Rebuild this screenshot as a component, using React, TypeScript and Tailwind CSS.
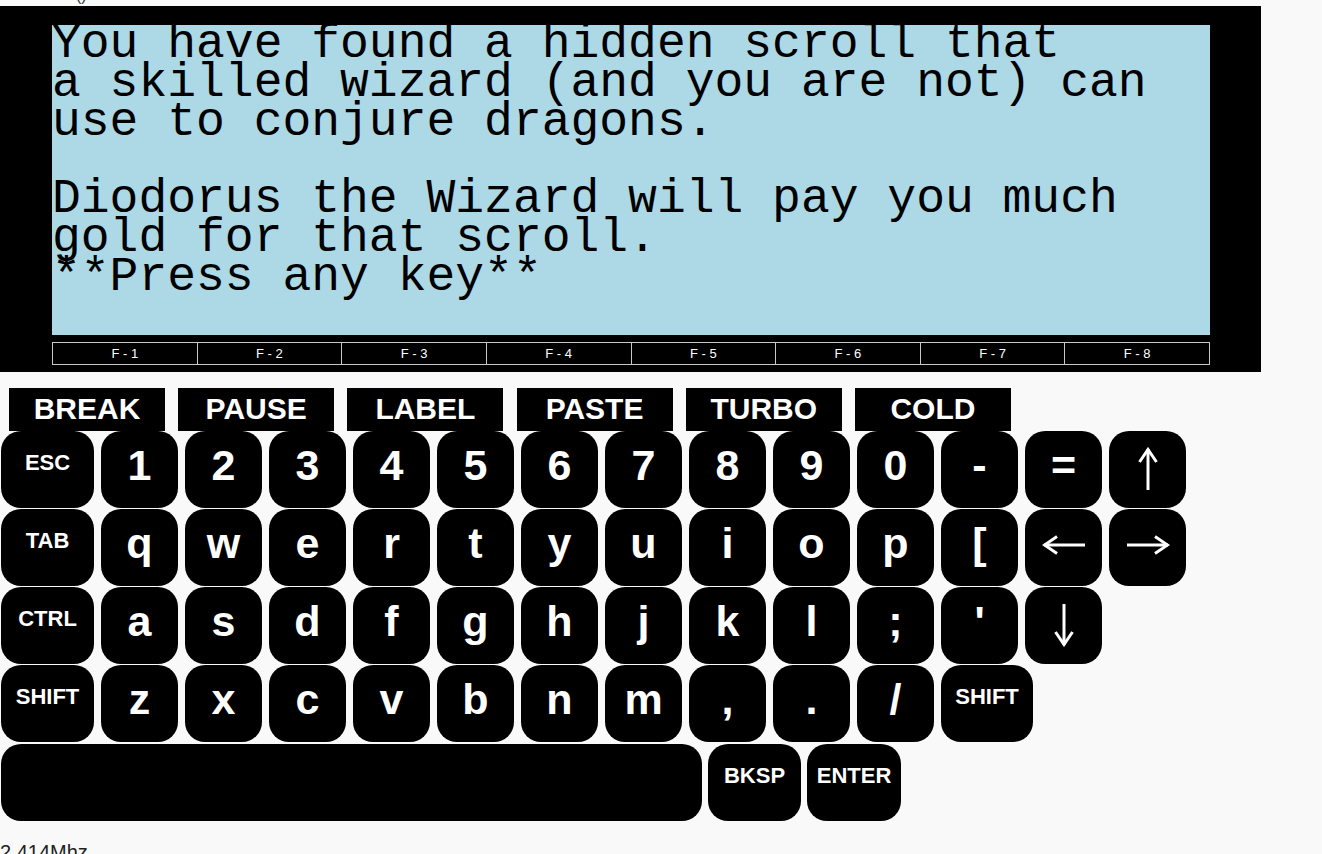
import React from "react";

const screenLines = [
  "You have found a hidden scroll that",
  "a skilled wizard (and you are not) can",
  "use to conjure dragons.",
  "",
  "Diodorus the Wizard will pay you much",
  "gold for that scroll.",
  "**Press any key**",
  "",
];

type KeyDef = { label: string; w?: string; small?: boolean; arrow?: "up" | "down" | "left" | "right" };

function Arrow({ dir }: { dir: "up" | "down" | "left" | "right" }) {
  const rot = { up: 0, right: 90, down: 180, left: 270 }[dir];
  return (
    <div className="h-[77px] flex items-start justify-center pt-[16px]">
      <svg
        width="44"
        height="44"
        viewBox="0 0 44 44"
        className={dir === "left" || dir === "right" ? "-mt-[2px]" : ""}
        style={{ transform: `rotate(${rot}deg)` }}
      >
        <line x1="22" y1="2" x2="22" y2="43" stroke="white" strokeWidth="3" />
        <path d="M13.5 15 L22 2.5 L30.5 15" fill="none" stroke="white" strokeWidth="3" strokeLinejoin="miter" />
      </svg>
    </div>
  );
}

function Key({ label, w, small, arrow }: KeyDef) {
  if (arrow) {
    return (
      <div className={`${w ?? "w-[77px]"} h-[77px] shrink-0 rounded-[20px] bg-black`}>
        <Arrow dir={arrow} />
      </div>
    );
  }
  return (
    <div
      className={`${w ?? "w-[77px]"} h-[77px] shrink-0 rounded-[20px] bg-black text-white text-center font-bold leading-normal ${
        small ? "text-[22px] pt-[15px]" : "text-[43px] pt-[2px]"
      }`}
    >
      {label}
    </div>
  );
}

function Row({ keys }: { keys: KeyDef[] }) {
  return (
    <div className="flex gap-[7px] pl-[1px]">
      {keys.map((k, i) => (
        <Key key={i} {...k} />
      ))}
    </div>
  );
}

const big = (s: string): KeyDef[] => s.split(" ").map((c) => ({ label: c }));

export default function App() {
  const fbtns = ["BREAK", "PAUSE", "LABEL", "PASTE", "TURBO", "COLD"];
  return (
    <div
      className="min-h-[854px] w-[1322px] bg-[#f9f9f9] text-black overflow-hidden"
      style={{ fontFamily: '"Liberation Sans", Arial, sans-serif' }}
    >
      <div className="h-[6px] overflow-hidden">
        <div className="-mt-[13px] pl-[76px] text-[16px] text-[#333] leading-[18px]">()</div>
      </div>
      <div className="w-[1261px] h-[366px] bg-black pt-[19px] pl-[52px]">
        <div
          className="w-[1158px] h-[310px] bg-[#add8e6] text-black text-[48px] leading-[38.75px] whitespace-pre overflow-hidden"
          style={{ fontFamily: '"Liberation Mono", "DejaVu Sans Mono", monospace' }}
        >
          {screenLines.map((l, i) => (
            <div key={i} className="h-[38.75px]">
              {l}
            </div>
          ))}
        </div>
        <div className="mt-[7px] w-[1158px] h-[23px] flex border border-[#c8c8c8]">
          {Array.from({ length: 8 }).map((_, i) => (
            <div
              key={i}
              className={`flex-1 flex items-center justify-center text-white text-[13px] ${
                i > 0 ? "border-l border-[#c8c8c8]" : ""
              }`}
            >
              {`F - ${i + 1}`}
            </div>
          ))}
        </div>
      </div>
      <div className="mt-[16px] flex gap-[13.2px] pl-[9px]">
        {fbtns.map((b) => (
          <div
            key={b}
            className="w-[156px] h-[43px] bg-black text-white font-bold text-[30px] flex items-center justify-center pb-[2px]"
          >
            {b}
          </div>
        ))}
      </div>
      <div className="flex flex-col gap-[1px]">
        <Row
          keys={[
            { label: "ESC", w: "w-[93px]", small: true },
            ...big("1 2 3 4 5 6 7 8 9 0 - ="),
            { label: "↑", arrow: "up" },
          ]}
        />
        <Row
          keys={[
            { label: "TAB", w: "w-[93px]", small: true },
            ...big("q w e r t y u i o p ["),
            { label: "←", arrow: "left" },
            { label: "→", arrow: "right" },
          ]}
        />
        <Row
          keys={[
            { label: "CTRL", w: "w-[93px]", small: true },
            ...big("a s d f g h j k l ; '"),
            { label: "↓", arrow: "down" },
          ]}
        />
        <Row
          keys={[
            { label: "SHIFT", w: "w-[93px]", small: true },
            ...big("z x c v b n m , . /"),
            { label: "SHIFT", w: "w-[92px]", small: true },
          ]}
        />
        <div className="flex gap-[6px] pl-[1px] mt-[1px]">
          <Key label="" w="w-[701px]" />
          <Key label="BKSP" w="w-[93px]" small />
          <Key label="ENTER" w="w-[94px]" small />
        </div>
      </div>
      <div className="mt-[20px] text-[20px] leading-[23px] text-[#222]">2.414Mhz</div>
    </div>
  );
}
